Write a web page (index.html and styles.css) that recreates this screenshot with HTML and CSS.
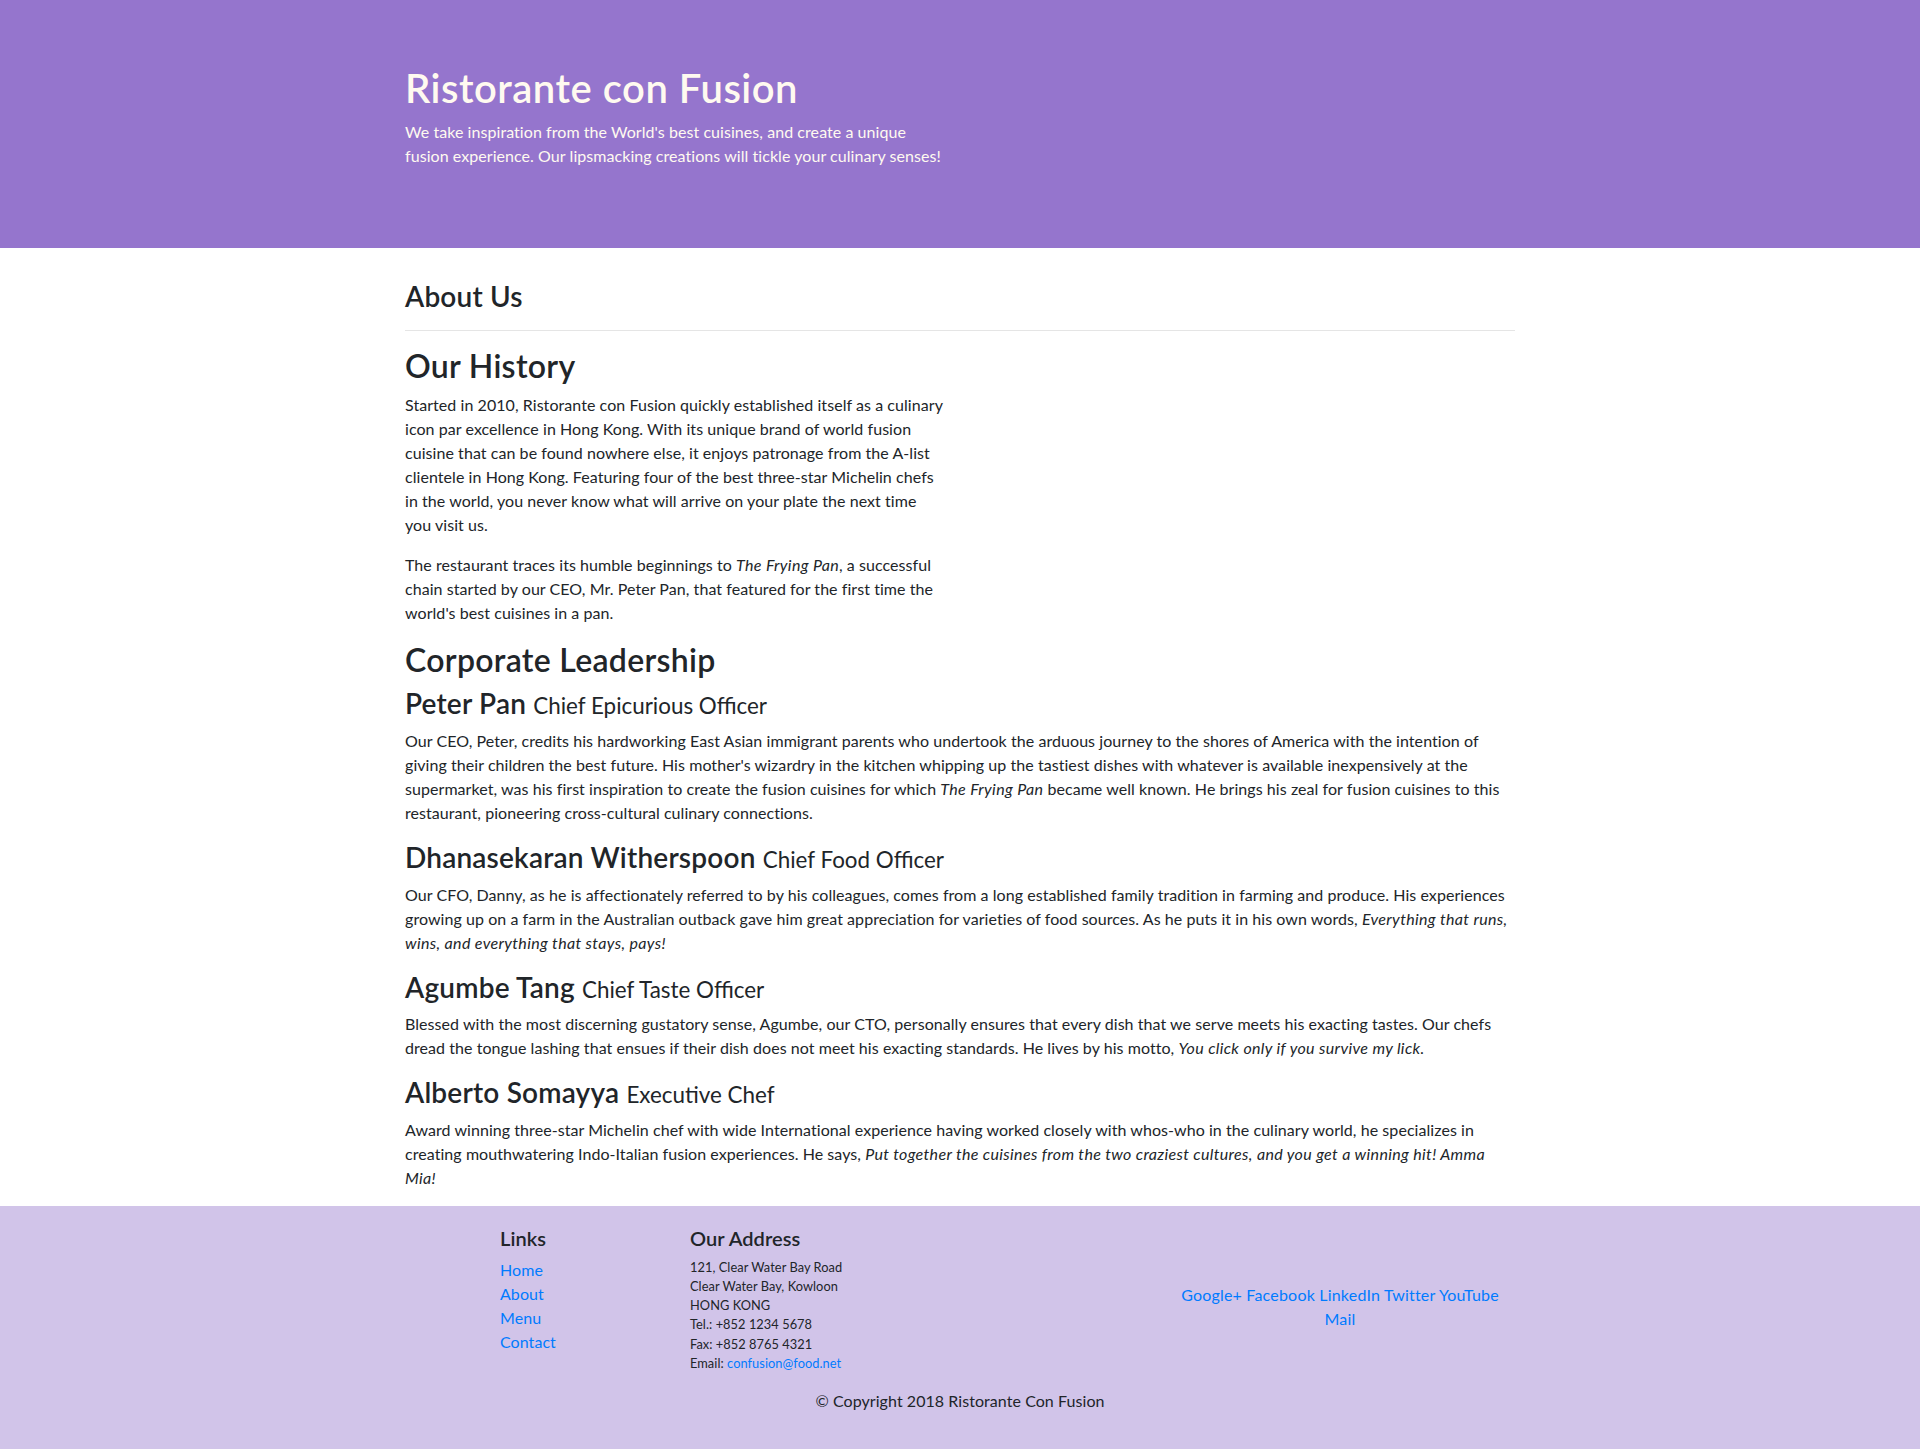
FILE: index.html
```html
<!DOCTYPE html>
<html lang="en">
<head>
<meta charset="utf-8">
<title>Ristorante con Fusion: About Us</title>
<link rel="stylesheet" href="styles.css">
</head>
<body>
<header class="jumbotron">
  <div class="container">
    <div class="col-half">
      <h1 class="brand-title">Ristorante con Fusion</h1>
      <p class="brand-lead">We take inspiration from the World's best cuisines, and create a unique fusion experience. Our lipsmacking creations will tickle your culinary senses!</p>
    </div>
  </div>
</header>

<main class="container">
  <h3 class="heading-3">About Us</h3>
  <hr class="divider">

  <div class="col-half">
    <h2 class="heading-2">Our History</h2>
    <p class="text">Started in 2010, Ristorante con Fusion quickly established itself as a culinary icon par excellence in Hong Kong. With its unique brand of world fusion cuisine that can be found nowhere else, it enjoys patronage from the A-list clientele in Hong Kong. Featuring four of the best three-star Michelin chefs in the world, you never know what will arrive on your plate the next time you visit us.</p>
    <p class="text">The restaurant traces its humble beginnings to <em class="quote">The Frying Pan</em>, a successful chain started by our CEO, Mr. Peter Pan, that featured for the first time the world's best cuisines in a pan.</p>
  </div>

  <h2 class="heading-2">Corporate Leadership</h2>
  <div class="leaders">
    <div class="leader">
      <h3 class="heading-3">Peter Pan <small class="leader-role">Chief Epicurious Officer</small></h3>
      <p class="text">Our CEO, Peter, credits his hardworking East Asian immigrant parents who undertook the arduous journey to the shores of America with the intention of giving their children the best future. His mother's wizardry in the kitchen whipping up the tastiest dishes with whatever is available inexpensively at the supermarket, was his first inspiration to create the fusion cuisines for which <em class="quote">The Frying Pan</em> became well known. He brings his zeal for fusion cuisines to this restaurant, pioneering cross-cultural culinary connections.</p>
    </div>
    <div class="leader">
      <h3 class="heading-3">Dhanasekaran Witherspoon <small class="leader-role">Chief Food Officer</small></h3>
      <p class="text">Our CFO, Danny, as he is affectionately referred to by his colleagues, comes from a long established family tradition in farming and produce. His experiences growing up on a farm in the Australian outback gave him great appreciation for varieties of food sources. As he puts it in his own words, <em class="quote">Everything that runs, wins, and everything that stays, pays!</em></p>
    </div>
    <div class="leader">
      <h3 class="heading-3">Agumbe Tang <small class="leader-role">Chief Taste Officer</small></h3>
      <p class="text">Blessed with the most discerning gustatory sense, Agumbe, our CTO, personally ensures that every dish that we serve meets his exacting tastes. Our chefs dread the tongue lashing that ensues if their dish does not meet his exacting standards. He lives by his motto, <em class="quote">You click only if you survive my lick.</em></p>
    </div>
    <div class="leader">
      <h3 class="heading-3">Alberto Somayya <small class="leader-role">Executive Chef</small></h3>
      <p class="text">Award winning three-star Michelin chef with wide International experience having worked closely with whos-who in the culinary world, he specializes in creating mouthwatering Indo-Italian fusion experiences. He says, <em class="quote">Put together the cuisines from the two craziest cultures, and you get a winning hit! Amma Mia!</em></p>
    </div>
  </div>
</main>

<footer class="footer">
  <div class="footer-inner">
    <div class="footer-row">
      <div class="footer-col footer-links">
        <h5 class="heading-5">Links</h5>
        <ul class="link-list">
          <li><a class="link" href="#">Home</a></li>
          <li><a class="link" href="#">About</a></li>
          <li><a class="link" href="#">Menu</a></li>
          <li><a class="link" href="#">Contact</a></li>
        </ul>
      </div>
      <div class="footer-col footer-address">
        <h5 class="heading-5">Our Address</h5>
        <address class="address">
          121, Clear Water Bay Road<br>
          Clear Water Bay, Kowloon<br>
          HONG KONG<br>
          Tel.: +852 1234 5678<br>
          Fax: +852 8765 4321<br>
          Email: <a class="link" href="#">confusion@food.net</a>
        </address>
      </div>
      <div class="footer-col footer-social">
        <a class="link" href="#">Google+</a>
        <a class="link" href="#">Facebook</a>
        <a class="link" href="#">LinkedIn</a>
        <a class="link" href="#">Twitter</a>
        <a class="link" href="#">YouTube</a>
        <a class="link" href="#">Mail</a>
      </div>
    </div>
    <div class="copyright">
      <p class="copyright-text">© Copyright 2018 Ristorante Con Fusion</p>
    </div>
  </div>
</footer>
</body>
</html>
```
FILE: styles.css
```css
html, body {
  margin: 0;
  padding: 0;
}
body {
  font-family: Lato, "Liberation Sans", sans-serif;
  font-size: 16px;
  line-height: 1.5;
  color: #212529;
  background: #fff;
  letter-spacing: 0.06px;
}
.container {
  max-width: 1110px;
  margin: 0 auto;
  padding: 0 15px;
}
.col-half {
  width: 540px;
}

/* header */
.jumbotron {
  background: #9575CD;
  color: floralwhite;
  padding: 64px 0;
  margin-bottom: 32px;
}
.brand-title {
  font-size: 40px;
  line-height: 1.2;
  font-weight: 600;
  letter-spacing: 0.5px;
  margin: 0 0 8px;
}
.brand-lead {
  margin: 0 0 16px;
}

/* headings */
.heading-2,
.heading-3,
.heading-5 {
  font-weight: 600;
  line-height: 1.2;
  margin: 0 0 8px;
}
.heading-2 {
  font-size: 32px;
  letter-spacing: 0.3px;
}
.heading-3 {
  font-size: 28px;
  letter-spacing: 0.2px;
}
.heading-5 {
  font-size: 20px;
}

.divider {
  border: 0;
  border-top: 1px solid rgba(0, 0, 0, 0.1);
  margin: 16px 0;
  height: 0;
}
.text {
  margin: 0 0 16px;
}
.quote {
  letter-spacing: 0.35px;
}
.leader-role {
  font-size: 80%;
  font-weight: 400;
  letter-spacing: 0;
}

/* footer */
.footer {
  background: #D1C4E9;
  padding: 20px 0;
}
.footer-inner {
  width: 1140px;
  margin: 0 auto;
}
.footer-row {
  display: flex;
}
.footer-col {
  padding: 0 15px;
  box-sizing: border-box;
}
.footer-links {
  margin-left: 95px;
  width: 190px;
}
.footer-address {
  width: 475px;
}
.footer-social {
  width: 380px;
  align-self: center;
  text-align: center;
  letter-spacing: 0.2px;
}
.link-list {
  list-style: none;
  margin: 0 0 16px;
  padding: 0;
}
.link {
  color: #007bff;
  text-decoration: none;
}
.address {
  font-style: normal;
  font-size: 12.8px;
  line-height: 19.2px;
  margin: 0 0 16px;
}
.copyright {
  text-align: center;
}
.copyright-text {
  margin: 0 0 16px;
}
```
